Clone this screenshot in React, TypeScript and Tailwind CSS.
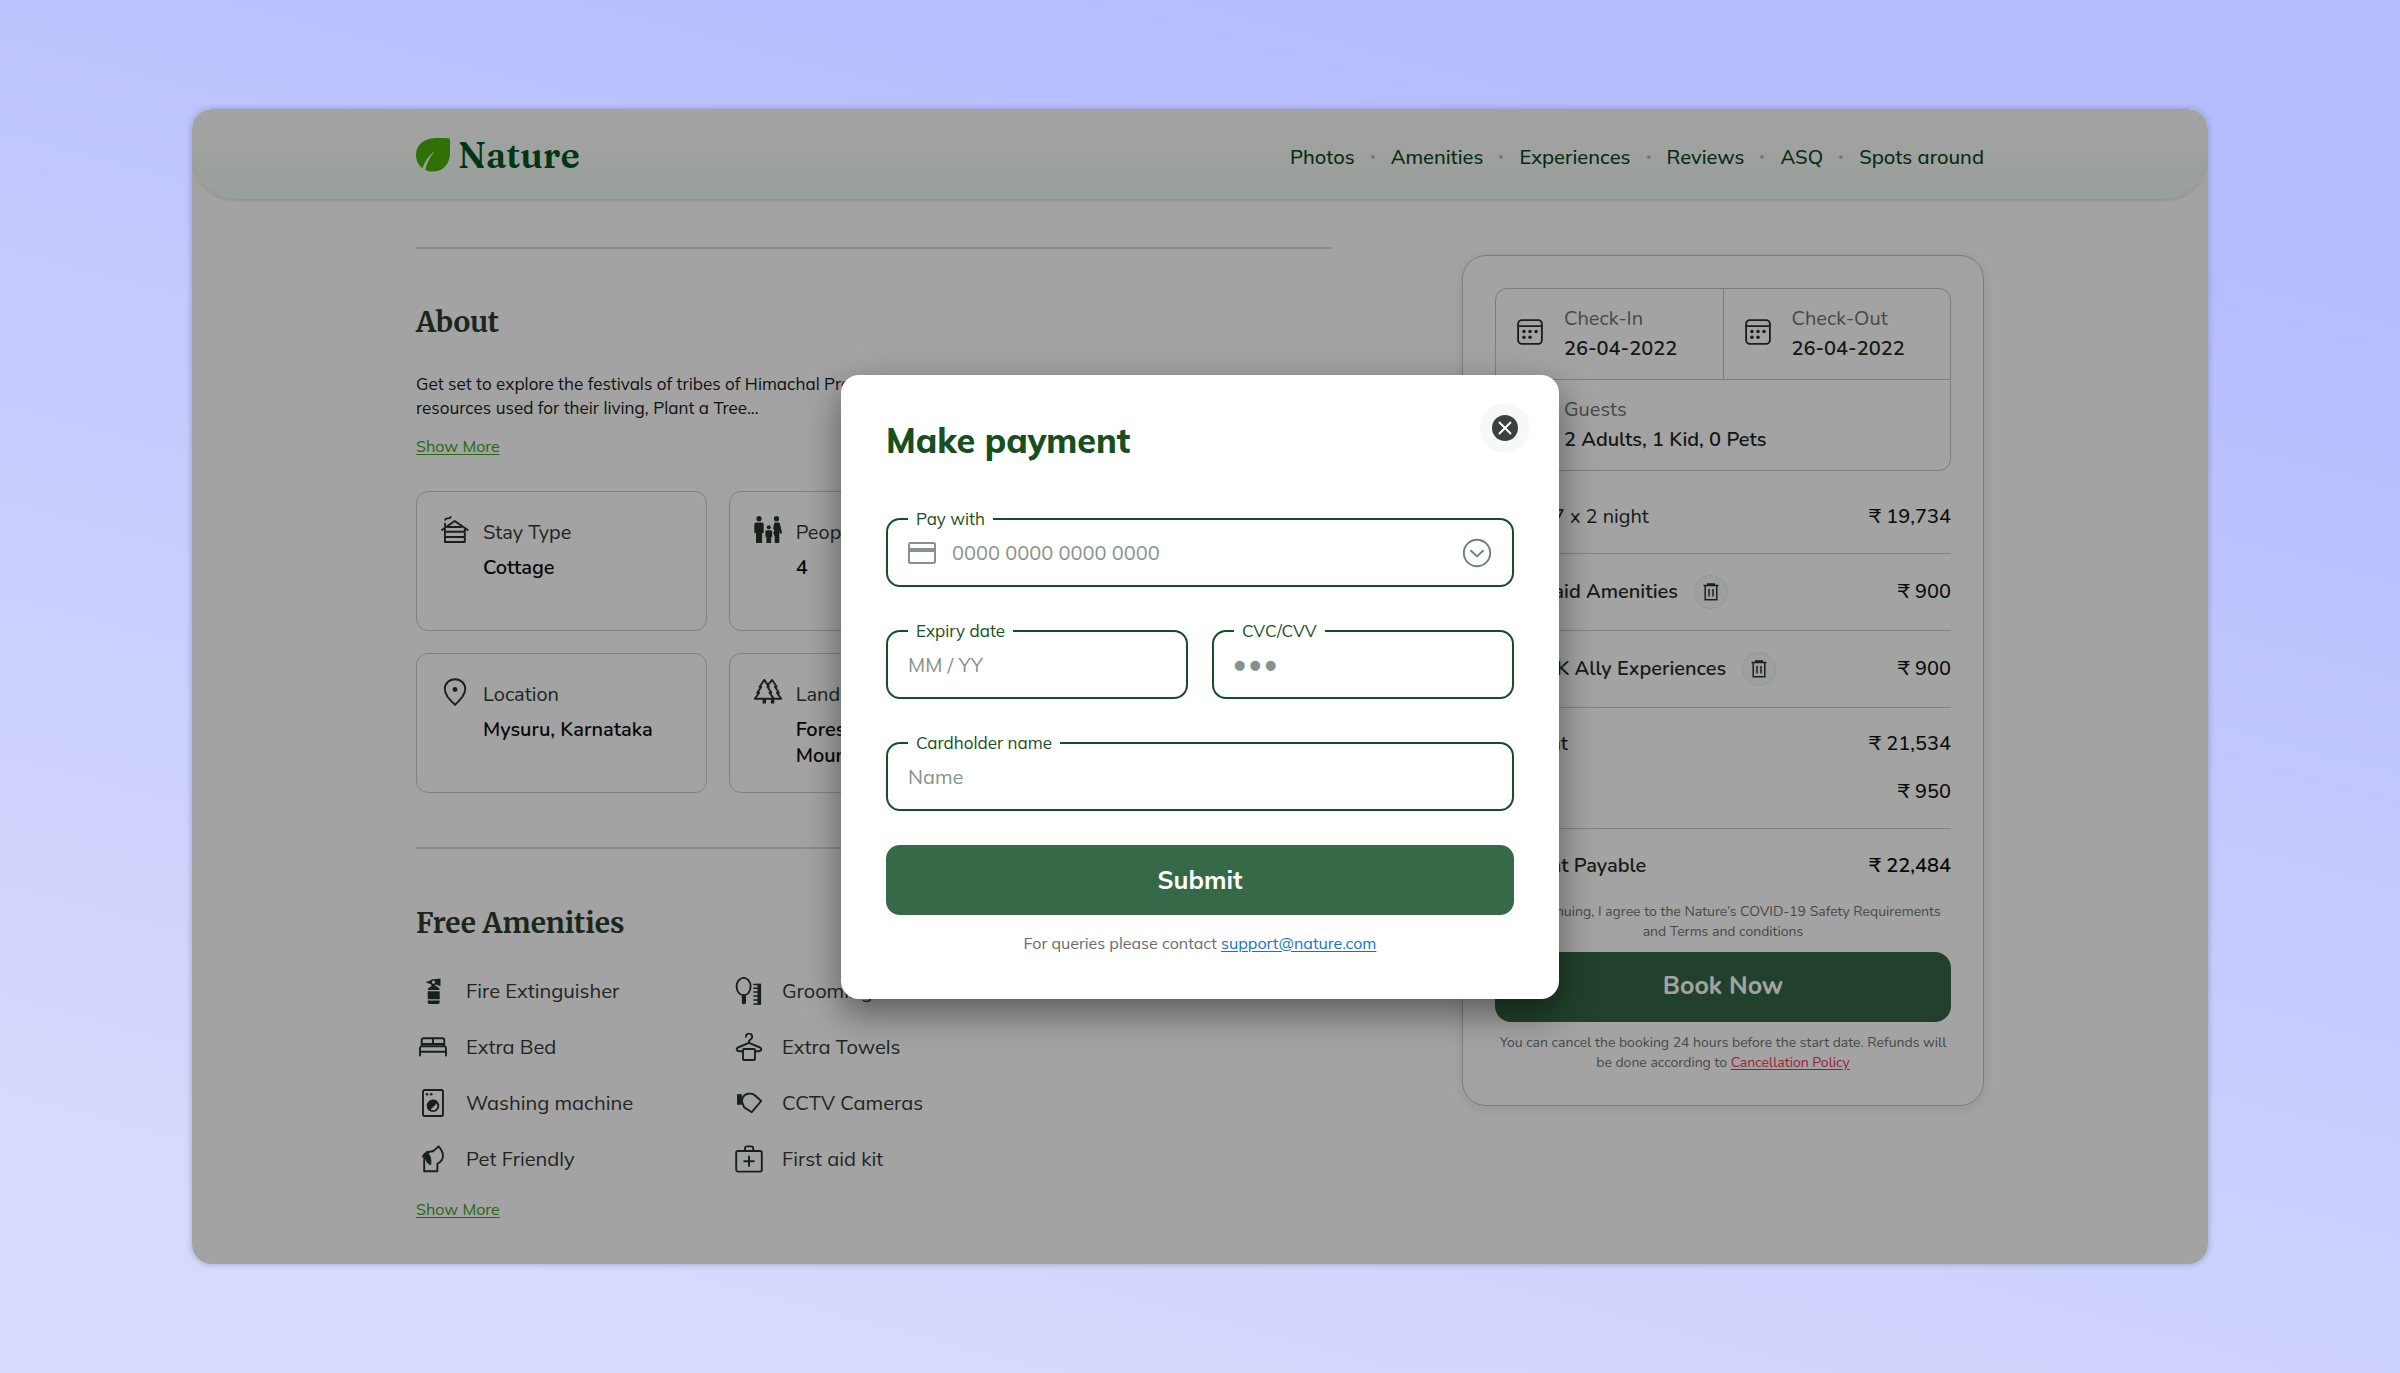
import type { ReactNode } from "react";

const MULISH = "font-['Mulish','Lato',sans-serif]";
const NUNITO = "font-['Nunito','Lato',sans-serif]";
const MERRIWEATHER = "font-['Merriweather','DejaVu_Serif_Condensed',serif]";

/* ---------- icons ---------- */

function Glyph({ children, className = "size-7" }: { children: ReactNode; className?: string }) {
  return (
    <svg
      viewBox="0 0 28 28"
      fill="none"
      stroke="currentColor"
      strokeWidth="1.9"
      strokeLinecap="round"
      strokeLinejoin="round"
      aria-hidden="true"
      className={`${className} shrink-0 text-[#26332a]`}
    >
      {children}
    </svg>
  );
}

const CottageIcon = () => (
  <Glyph>
    <path d="M.9 14 13.7 5l13 9M3.9 13v13h19.9V13M3.9 15.8h19.9M3.9 21h19.9M7.2 11h13M4 10V7.6M4.2 3.9c.3-1.3 1.5-1.6 2.6-1.5 1.5.1 2.6-.2 2.9-1.4" />
  </Glyph>
);

const FamilyIcon = () => (
  <Glyph>
    <g fill="currentColor" stroke="none">
      <circle cx="5" cy="2.7" r="2.6" />
      <path d="M2.3 6.6h5.4a2 2 0 0 1 2 2v7.6a1 1 0 0 1-1.6.8v10H2V17a1 1 0 0 1-1.7-.8V8.6a2 2 0 0 1 2-2Z" />
      <circle cx="14.8" cy="11.3" r="2" />
      <path d="M13 14.2h3.6a1.6 1.6 0 0 1 1.6 1.6v5h-1V27h-4.800v-6.200h-1v-5a1.600 1.600 0 0 1 1.600-1.600Z" />
      <circle cx="22.5" cy="2.7" r="2.6" />
      <path d="M20.800 6.600h3.400c1 0 1.500.6 1.800 1.400l2 8.400c.2 1.200-1.200 1.700-1.800 1l-.9-1.800V27h-4.600v-6.500l-1.400-3.600 1-2.600-1.200-1.500 1-5c.1-.8.6-1.200.7-1.200Z" />
    </g>
  </Glyph>
);

const PinIcon = () => (
  <Glyph>
    <path d="M14 1.200c5.900 0 10.200 4.300 10.200 9.900 0 6-5 10.500-10.200 15.700C8.800 21.600 3.800 17.100 3.800 11.100 3.800 5.500 8.100 1.200 14 1.200Z" />
    <circle cx="14" cy="11.5" r="2.4" fill="currentColor" stroke="none" />
  </Glyph>
);

const TreesIcon = () => (
  <Glyph>
    <path d="M10.300 1.900 5.600 8.700h1.700l-4 5.900h1.900L.9 20.800h18.900l-4.300-6.200h1.800l-3.900-5.900h1.500ZM14.200 6.700l4-4.800 4.400 6.800h-1.700l3.900 5.900h-1.900l4.300 6.200h-7.400" />
    <path d="M10.300 21.200v4.400M18.600 21.200v4.400" strokeWidth="3.4" strokeLinecap="butt" />
  </Glyph>
);

const ExtinguisherIcon = () => (
  <Glyph>
    <g fill="currentColor" stroke="none">
      <path
        fillRule="evenodd"
        d="M6.500 5.200 12 3.200l.8-1h2.900l5.800-.7v7.800l-5-2-.5 1.300 2.200 1.200c1.500.8 2.400 1.700 2.500 3.200H8.800c.1-1.500 1-2.400 2.500-3.200l1.400-.9-.8-1.700Zm8 1.600a1.600 1.600 0 1 0 0-3.200 1.600 1.600 0 0 0 0 3.200Z"
      />
      <path d="M8.700 14.200h12v8h-12zM8.700 23.400h12v1.900a1.700 1.700 0 0 1-1.700 1.700h-8.600a1.700 1.700 0 0 1-1.700-1.700Z" />
    </g>
  </Glyph>
);

const BedIcon = () => (
  <Glyph>
    <path d="M1 22.500v-7.200a2 2 0 0 1 1.600-2H25.400a2 2 0 0 1 1.600 2v7.200M1 18.700h26M2.700 13V7.200a2 2 0 0 1 2-2h18.600a2 2 0 0 1 2 2V13M14 5.200v5.800M2.900 11h22.200" />
  </Glyph>
);

const WasherIcon = () => (
  <Glyph>
    <rect x="4" y="1" width="20" height="26" rx="1.8" />
    <circle cx="14" cy="16.8" r="5.3" />
    <path d="M17.800 13 10.200 20.600A5.400 5.400 0 0 1 17.800 13Z" fill="currentColor" />
    <circle cx="8" cy="5.2" r="1.3" fill="currentColor" stroke="none" />
    <circle cx="12.2" cy="5.2" r="1.3" fill="currentColor" stroke="none" />
  </Glyph>
);

const DogIcon = () => (
  <Glyph>
    <path d="M5.200 26.200V14.500M8 7.200l5.500-.9c2.400-1.200 4-3 6-5 2.500 2.600 4.500 6.200 4.500 9.700 0 4-2.800 6.200-5.600 7.800v7.400H5.200" />
    <path d="M8 6.800c2.800 3 4.600 7.200 3.700 12.700-3-.4-4-2.600-4.900-5.400l-3.200-1.900C3.700 9.700 5.500 7.800 8 6.800Z" fill="currentColor" strokeWidth="1" />
  </Glyph>
);

const GroomingIcon = () => (
  <Glyph>
    <ellipse cx="8.6" cy="9.6" rx="7" ry="8.7" />
    <path d="M8.900 19.500v5.800" strokeWidth="4.2" />
    <path d="M24.300 8.500v17.600" strokeWidth="3.6" strokeLinejoin="miter" strokeLinecap="square" />
    <path d="M18.900 7.600h5M18.900 11.300h5M18.900 15h5M18.900 18.900h5M18.900 22.900h5M18.900 26.900h5" strokeWidth="1.5" />
  </Glyph>
);

const HangerIcon = () => (
  <Glyph>
    <path d="M10.900 3.700a3.100 3.100 0 1 1 4.600 2.700c-1 .6-1.500 1.200-1.500 2.400v1.100M8 18.300H4.300c-2.700 0-3.400-2.600-1.400-3.800L14 9.900l11.100 4.600c2 1.200 1.300 3.800-1.400 3.800H20" />
    <rect x="8" y="16" width="12" height="11" rx="1" />
  </Glyph>
);

const CameraIcon = () => (
  <Glyph>
    <path d="M2 5.200h4.800v10.600H2z" fill="currentColor" stroke="none" />
    <path d="M6.800 12.400c.3-3.800 2.200-6.800 6.200-7.600 2.300-.4 4.500-.1 6.200.9L26.200 12 16.800 23.200 9.200 18.400 6.800 12.400Z" />
  </Glyph>
);

const FirstAidIcon = () => (
  <Glyph>
    <rect x="1.2" y="6" width="25.6" height="20.6" rx="1.8" />
    <path d="M10 6V3.400a2 2 0 0 1 2-2h4.200a2 2 0 0 1 2 2V6M14 11.400v9.600M9.200 16.200h9.600" />
  </Glyph>
);

const CalendarIcon = () => (
  <Glyph className="size-[26px]">
    <rect x="1.2" y="1.2" width="25.6" height="25.6" rx="4" strokeWidth="2" />
    <path d="M1.200 7.600h25.600" strokeWidth="2" />
    <g fill="currentColor" stroke="none">
      <circle cx="7.5" cy="13.4" r="1.9" />
      <circle cx="14" cy="13.4" r="1.9" />
      <circle cx="20.5" cy="13.4" r="1.9" />
      <circle cx="7.5" cy="19.6" r="1.9" />
      <circle cx="14" cy="19.6" r="1.9" />
    </g>
  </Glyph>
);

const TrashIcon = () => (
  <svg viewBox="0 0 18 18" fill="none" stroke="currentColor" strokeWidth="1.5" aria-hidden="true" className="size-[18px] text-[#26332a]">
    <path d="M1.500 2.600h15M5.700 2.400V1h6.600v1.400M3.200 2.800v14h11.600v-14M7 6v7.500M11 6v7.500" />
  </svg>
);

/* ---------- page sections ---------- */

const NAV = ["Photos", "Amenities", "Experiences", "Reviews", "ASQ", "Spots around"];

function Header() {
  return (
    <header className="rounded-b-[44px] border-b border-[#e0ebe5] bg-linear-to-b from-white to-[#eff9f2] shadow-[0_1px_3px_rgba(0,0,0,0.1)]">
      <div className="mx-auto flex h-[90px] w-full max-w-[1568px] items-center justify-between pt-px">
        <a href="#home" className="flex items-center gap-2">
          <svg viewBox="0 0 34 34" className="size-[34px]" aria-hidden="true">
            <path
              fill="#4baf0c"
              d="M33.800.4C34 5 34.600 12 33.800 18c-1.300 9.500-8 15.600-16.800 15.600-3 0-5.500-.6-7.700-1.700 1.500-6.800 4.500-13.400 10.200-19.200C12.700 17.500 8.700 23.500 6.600 30.200 2.500 27.100 0 22.600 0 17.200 0 8.500 6 1.900 15.500.5 21-.2 28.500.2 33.800.4Z"
            />
          </svg>
          <span className="font-['Fraunces','Liberation_Serif',serif] text-4xl leading-none font-semibold text-[#005322]">Nature</span>
        </a>
        <nav className="pt-1">
          <ul className="flex items-center">
            {NAV.map((item, i) => (
              <li key={item} className="flex items-center">
                {i > 0 && <span className="mx-4 size-1 rounded-full bg-[#b5c4bb]" />}
                <a href={`#${item}`} className="text-xl font-medium text-[#0b4419]">
                  {item}
                </a>
              </li>
            ))}
          </ul>
        </nav>
      </div>
    </header>
  );
}

function InfoCard({ icon, label, children }: { icon: ReactNode; label: string; children: ReactNode }) {
  return (
    <div className="flex min-h-[140px] gap-3.5 rounded-xl border border-[#c3cec8] px-6 pt-6">
      {icon}
      <dl className={`${NUNITO} pt-1 text-[20px] leading-[26px]`}>
        <dt className="text-[#303b32]">{label}</dt>
        <dd className="mt-[9px] font-semibold text-[#0b0d0b]">{children}</dd>
      </dl>
    </div>
  );
}

const AMENITIES: [ReactNode, string][] = [
  [<ExtinguisherIcon />, "Fire Extinguisher"],
  [<GroomingIcon />, "Grooming kit"],
  [<BedIcon />, "Extra Bed"],
  [<HangerIcon />, "Extra Towels"],
  [<WasherIcon />, "Washing machine"],
  [<CameraIcon />, "CCTV Cameras"],
  [<DogIcon />, "Pet Friendly"],
  [<FirstAidIcon />, "First aid kit"],
];

function ShowMore({ className }: { className: string }) {
  return (
    <a href="#more" className={`${className} block w-fit text-base leading-6 text-[#3da417] underline underline-offset-2`}>
      Show More
    </a>
  );
}

function Details() {
  return (
    <section className="w-full max-w-[916px] pt-[47px] pb-[43px]">
      <hr className="border-t-2 border-[#d9dcda]" />
      <h2 className={`${MERRIWEATHER} mt-[53px] text-[28px] leading-10 font-bold text-[#2c3a2f]`}>About</h2>
      <p className="mt-[30px] text-[17px] leading-6 text-[#171a17]">
        Get set to explore the festivals of tribes of Himachal Pradesh, their culture and the natural
        <br />
        resources used for their living, Plant a Tree...
      </p>
      <ShowMore className="mt-3.5" />
      <div className="mt-[33px] grid grid-cols-3 gap-[22px]">
        <InfoCard icon={<CottageIcon />} label="Stay Type">Cottage</InfoCard>
        <InfoCard icon={<FamilyIcon />} label="People">4</InfoCard>
        <InfoCard icon={<CottageIcon />} label="Rooms">2</InfoCard>
        <InfoCard icon={<PinIcon />} label="Location">Mysuru, Karnataka</InfoCard>
        <InfoCard icon={<TreesIcon />} label="Landmark">
          Forests,
          <br />
          Mountains
        </InfoCard>
        <InfoCard icon={<PinIcon />} label="Distance">12 km</InfoCard>
      </div>
      <hr className="mt-[54px] border-t-2 border-[#d9dcda]" />
      <h2 className={`${MERRIWEATHER} mt-[54px] text-[28px] leading-10 font-bold text-[#2c3a2f]`}>Free Amenities</h2>
      <ul className="mt-5 grid grid-cols-[316px_1fr]">
        {AMENITIES.map(([icon, name]) => (
          <li key={name} className="flex h-14 items-center gap-4 text-xl text-[#353a36]">
            <span className="flex w-[34px] justify-center">{icon}</span>
            {name}
          </li>
        ))}
      </ul>
      <ShowMore className="mt-2.5" />
    </section>
  );
}

function Stay({ icon, label, value }: { icon?: ReactNode; label: string; value: string }) {
  return (
    <div className="flex h-[90px] flex-1 items-center gap-[21px] pl-[21px] text-[20px] leading-[30px]">
      <span className="flex w-[26px] shrink-0 pb-1">{icon}</span>
      <div>
        <p className="text-[#6f736f]">{label}</p>
        <p className="font-semibold text-[#1d261f]">{value}</p>
      </div>
    </div>
  );
}

function Removable({ label, price }: { label: string; price: string }) {
  return (
    <div className="flex h-[77px] items-center justify-between border-b border-[#c6cfca]">
      <div className="flex items-center gap-4 font-semibold">
        {label}
        <button type="button" aria-label={`Remove ${label}`} className="flex size-[34px] items-center justify-center rounded-full border border-[#e9eeeb] bg-[#f8fbf9]">
          <TrashIcon />
        </button>
      </div>
      <span className="font-medium text-[#111411]">{price}</span>
    </div>
  );
}

function Booking() {
  return (
    <aside className={`${NUNITO} mt-[55px] w-[522px] shrink-0 self-start rounded-3xl border border-[#bcc8c1] px-8 py-8 text-[20px] text-[#232d25] shadow-[0_2px_12px_rgba(0,0,0,0.1)]`}>
      <div className="rounded-xl border border-[#bcc8c1]">
        <div className="flex divide-x divide-[#bcc8c1] border-b border-[#bcc8c1]">
          <Stay icon={<CalendarIcon />} label="Check-In" value="26-04-2022" />
          <Stay icon={<CalendarIcon />} label="Check-Out" value="26-04-2022" />
        </div>
        <Stay icon={<FamilyIcon />} label="Guests" value="2 Adults, 1 Kid, 0 Pets" />
      </div>
      <div className="mt-2.5 flex h-[73px] items-center justify-between border-b border-[#c6cfca]">
        <span>₹ 9,867 x 2 night</span>
        <span className="font-medium text-[#111411]">₹ 19,734</span>
      </div>
      <Removable label="Your Paid Amenities" price="₹ 900" />
      <Removable label="Your OK Ally Experiences" price="₹ 900" />
      <div className="border-b border-[#c6cfca] py-3 font-medium">
        <div className="flex h-12 items-center justify-between">
          <span>Amount</span>
          <span className="text-[#111411]">₹ 21,534</span>
        </div>
        <div className="flex h-12 items-center justify-between">
          <span>Tax</span>
          <span className="text-[#111411]">₹ 950</span>
        </div>
      </div>
      <div className="flex h-[73px] items-center justify-between font-semibold">
        <span>Amount Payable</span>
        <span className="text-[#0b0d0b]">₹ 22,484</span>
      </div>
      <p className="text-center text-sm leading-5 text-[#6f736f]">
        By continuing, I agree to the Nature’s COVID-19 Safety Requirements and Terms and conditions
      </p>
      <button type="button" className="mt-2.5 h-[70px] w-full rounded-2xl bg-[#346646] text-[25px] font-bold text-white">
        Book Now
      </button>
      <p className="mt-[11px] text-center text-sm leading-5 text-[#6f736f]">
        You can cancel the booking 24 hours before the start date. Refunds will be done according to{" "}
        <a href="#policy" className="text-[#e8355a] underline underline-offset-2">
          Cancellation Policy
        </a>
      </p>
    </aside>
  );
}

/* ---------- payment dialog ---------- */

function Field({ id, label, children }: { id: string; label: string; children: ReactNode }) {
  return (
    <fieldset className="min-w-0 flex-1 rounded-[14px] border-2 border-[#174f24] pb-2">
      <legend className="ml-5 px-2 text-[17px] leading-5 text-[#174f1e]">
        <label htmlFor={id}>{label}</label>
      </legend>
      <div className="flex h-12 items-center px-5">{children}</div>
    </fieldset>
  );
}

const INPUT = "min-w-0 flex-1 bg-transparent text-xl text-[#2c3a2f] outline-none placeholder:text-[#84938a]";

function PaymentDialog() {
  return (
    <div className="absolute inset-0 flex items-center justify-center rounded-[20px] bg-black/36">
      <form
        role="dialog"
        aria-labelledby="pay-title"
        className="w-[718px] rounded-[18px] bg-white px-[45px] pt-7 pb-11 shadow-[0_14px_36px_rgba(0,0,0,0.45)]"
      >
        <div className="flex items-start justify-between">
          <h1 id="pay-title" className="mt-[13px] text-[34px] leading-[50px] font-extrabold text-[#174f1e]">
            Make payment
          </h1>
          <button type="button" aria-label="Close" className="-mr-4 flex size-[50px] items-center justify-center rounded-full bg-[#f7f9f8]">
            <svg viewBox="0 0 26 26" className="size-[26px]" aria-hidden="true">
              <circle cx="13" cy="13" r="13" fill="#3b413c" />
              <path d="m7.500 7.500 11 11m0-11-11 11" stroke="#fff" strokeWidth="1.9" strokeLinecap="round" />
            </svg>
          </button>
        </div>
        <div className="mt-[43px] flex flex-col gap-[34px]">
          <Field id="card" label="Pay with">
            <svg viewBox="0 0 28 22" fill="none" stroke="#84938a" strokeWidth="2" className="mr-4 h-[22px] w-7 shrink-0" aria-hidden="true">
              <rect x="1" y="1" width="26" height="20" rx="1.5" />
              <path d="M1 8h26" strokeWidth="4" />
            </svg>
            <input id="card" type="text" placeholder="0000 0000 0000 0000" className={INPUT} />
            <button type="button" aria-label="Choose a card" className="shrink-0">
              <svg viewBox="0 0 30 30" fill="none" stroke="#6f8177" strokeWidth="1.9" strokeLinecap="round" strokeLinejoin="round" className="size-[30px]" aria-hidden="true">
                <circle cx="15" cy="15" r="13.2" />
                <path d="m9 12.800 6 5.600 6-5.600" />
              </svg>
            </button>
          </Field>
          <div className="flex gap-6">
            <Field id="expiry" label="Expiry date">
              <input id="expiry" type="text" placeholder="MM / YY" className={INPUT} />
            </Field>
            <Field id="cvc" label="CVC/CVV">
              <input
                id="cvc"
                type="password"
                placeholder="● ● ●"
                className="min-w-0 flex-1 bg-transparent font-['DejaVu_Sans',sans-serif] text-[13px] text-[#2c3a2f] outline-none placeholder:text-[#84938a]"
              />
            </Field>
          </div>
          <Field id="holder" label="Cardholder name">
            <input id="holder" type="text" placeholder="Name" className={INPUT} />
          </Field>
          <button type="submit" className="h-[70px] rounded-[14px] bg-[#366947] text-[25px] font-bold text-white">
            Submit
          </button>
        </div>
        <p className="mt-4 text-center text-base leading-6 text-[#6b6b6b]">
          For queries please contact{" "}
          <a href="mailto:support@nature.com" className="text-[#1170d8] underline underline-offset-2">
            support@nature.com
          </a>
        </p>
      </form>
    </div>
  );
}

export default function App() {
  return (
    <div className={`${MULISH} flex min-h-screen items-center bg-linear-[195deg,#b6bdff_15%,#d7dafd_88%] px-[8%]`}>
      <div className="relative w-full rounded-[20px] bg-white shadow-[0_0_6px_rgba(60,60,90,0.35)]">
        <div className="overflow-hidden rounded-[20px]">
          <Header />
          <main className="mx-auto flex w-full max-w-[1568px] justify-between gap-16">
            <Details />
            <Booking />
          </main>
        </div>
        <PaymentDialog />
      </div>
    </div>
  );
}
